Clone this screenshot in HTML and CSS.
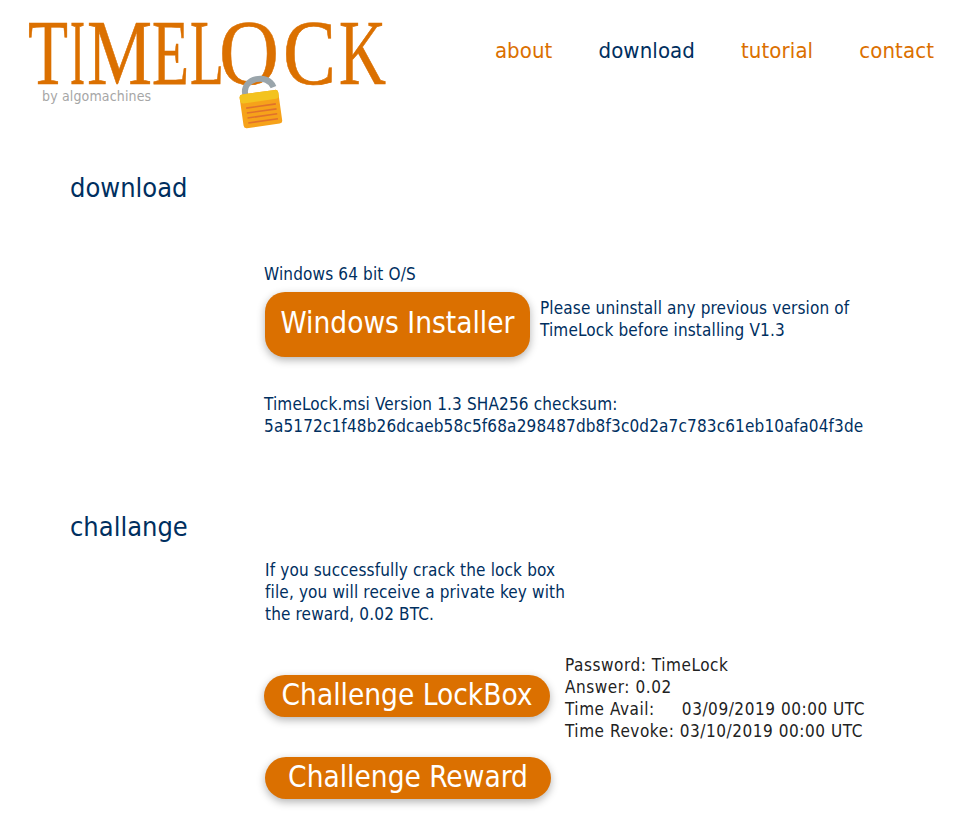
FILE: index.html
```html
<html>
<head>
    <title>TimeLock</title>
    <link rel="stylesheet" href="styles.css">
</head>
<body>

<div class="header">
    <div class="logo">
        <svg width="400" height="140" xmlns="http://www.w3.org/2000/svg">
            <text class="wordmark" y="84"><tspan x="28" textLength="40" lengthAdjust="spacingAndGlyphs">T</tspan><tspan x="70" textLength="15" lengthAdjust="spacingAndGlyphs">I</tspan><tspan x="87" textLength="65" lengthAdjust="spacingAndGlyphs">M</tspan><tspan x="152" textLength="37" lengthAdjust="spacingAndGlyphs">E</tspan><tspan x="190" textLength="34" lengthAdjust="spacingAndGlyphs">L</tspan><tspan x="219" textLength="60" lengthAdjust="spacingAndGlyphs">O</tspan><tspan x="283" textLength="53" lengthAdjust="spacingAndGlyphs">C</tspan><tspan x="339" textLength="47" lengthAdjust="spacingAndGlyphs">K</tspan></text>
            <text class="byline" x="42" y="101">by algomachines</text>
            <!-- padlock -->
            <g transform="rotate(-8 261 106)">
                <path d="M247 97 V91 C247 76 272 74 276 89" fill="none" stroke="#9aa5ab" stroke-width="6"/>
                <rect x="241" y="92" width="39" height="34" rx="3" fill="#f6a21a"/>
                <rect x="241" y="92" width="39" height="9" rx="3" fill="#f3c31f"/>
                <path d="M246 106 H276 M246 111 H276 M246 116 H276 M246 121 H276" stroke="#e0722c" stroke-width="1.6"/>
            </g>
        </svg>
    </div>
    <div class="nav">
        <a href="#">about</a>
        <a href="#" class="current">download</a>
        <a href="#">tutorial</a>
        <a href="#">contact</a>
    </div>
</div>

<div class="section download">
    <h2>download</h2>
    <div class="content">
        <p class="os">Windows 64 bit O/S</p>
        <div class="install-row">
            <a href="#" class="button big">Windows Installer</a>
            <p class="note">Please uninstall any previous version of TimeLock before installing V1.3</p>
        </div>
        <p class="checksum">TimeLock.msi Version 1.3 SHA256 checksum:<br>5a5172c1f48b26dcaeb58c5f68a298487db8f3c0d2a7c783c61eb10afa04f3de</p>
    </div>
</div>

<div class="section challenge">
    <h2>challange</h2>
    <div class="content">
        <p class="intro">If you successfully crack the lock box file, you will receive a private key with the reward, 0.02 BTC.</p>
        <div class="challenge-row">
            <a href="#" class="button pill">Challenge LockBox</a>
            <p class="details">Password: TimeLock
Answer: 0.02
Time Avail:     03/09/2019 00:00 UTC
Time Revoke: 03/10/2019 00:00 UTC</p>
        </div>
        <a href="#" class="button pill reward">Challenge Reward</a>
    </div>
</div>

</body>
</html>
```

FILE: styles.css
```css
body {
    margin: 0;
    background: white;
    color: #002f5f;
    font-family: "DejaVu Sans", sans-serif;
    font-stretch: condensed;
    font-size: 17px;
    letter-spacing: 0.15px;
    line-height: 22px;
}
p {
    margin: 0;
}
a {
    text-decoration: none;
}
.header {
    display: flex;
    justify-content: space-between;
    height: 140px;
}
.logo svg {
    display: block;
}
.wordmark {
    font-family: "Liberation Serif", serif;
    font-size: 93px;
    fill: #db7000;
    stroke: #db7000;
    stroke-width: 0.6px;
    letter-spacing: 0;
}
.byline {
    font-size: 14px;
    fill: #a6a6a6;
    letter-spacing: 0.15px;
}
.nav {
    display: flex;
    gap: 46px;
    padding: 36px 40px 0 0;
    font-size: 22px;
    letter-spacing: 0.1px;
    line-height: 30px;
}
.nav a {
    color: #db7000;
}
.nav a.current {
    color: #002f5f;
}
.section h2 {
    margin: 0;
    padding-left: 70px;
    font-size: 27px;
    font-weight: normal;
    letter-spacing: 0;
    line-height: 36px;
}
.download {
    padding-top: 30px;
}
.content {
    padding-left: 264px;
}
.download .os {
    margin-top: 57px;
}
.button {
    display: block;
    box-sizing: border-box;
    background: #db7000;
    color: white;
    text-align: center;
    letter-spacing: 0;
    box-shadow: 0 3px 8px rgba(0, 0, 0, 0.3);
}
.big {
    flex: none;
    width: 265px;
    height: 65px;
    margin-left: 1px;
    border-radius: 20px;
    font-size: 29.5px;
    line-height: 63px;
}
.install-row {
    display: flex;
    gap: 10px;
    margin-top: 7px;
}
.note {
    width: 330px;
    padding-top: 5px;
}
.checksum {
    margin-top: 36px;
}
.challenge {
    padding-top: 72px;
}
.intro {
    width: 310px;
    margin: 14px 0 0 1px;
}
.challenge-row {
    display: flex;
    align-items: flex-start;
    gap: 15px;
    margin-top: 29px;
}
.pill {
    flex: none;
    width: 286px;
    height: 42px;
    border-radius: 21px;
    font-size: 29.5px;
    line-height: 40px;
}
.challenge-row .pill {
    margin-top: 21px;
}
.details {
    color: #222;
    letter-spacing: 0.55px;
    white-space: pre;
}
.reward {
    margin: 15px 0 0 1px;
}
```
